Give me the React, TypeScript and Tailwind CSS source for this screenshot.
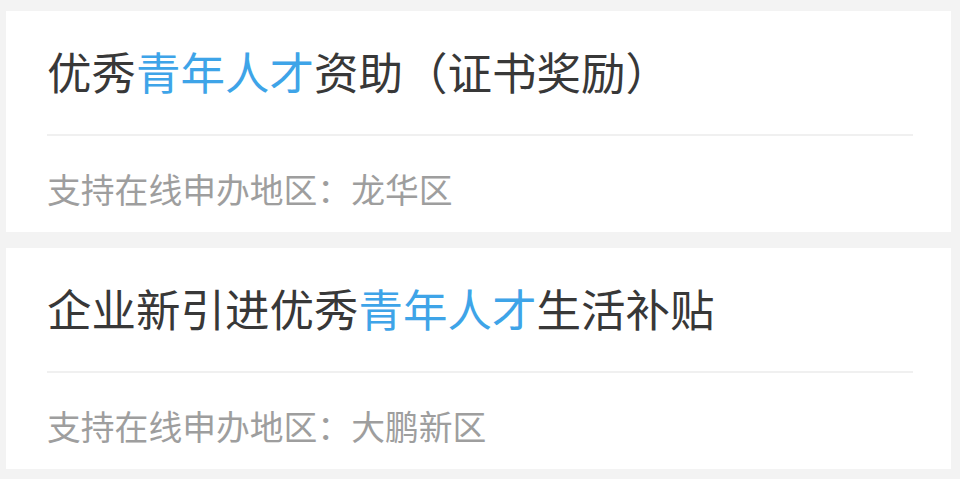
import React from "react";

const font = { fontFamily: '"Noto Sans CJK SC", "Noto Sans", sans-serif' };

function Card({ before, hl, after, region }: { before: string; hl: string; after: string; region: string }) {
  return (
    <div className="bg-white h-[221px] pl-[41px] pr-[38px] pt-[38px] flex flex-col">
      <div className="text-[44.5px] leading-[44px] font-normal text-[#383838] whitespace-nowrap">
        {before}
        <span className="text-[#3ea4e8]">{hl}</span>
        {after}
      </div>
      <div className="mt-[41px] h-[2px] bg-[#f0f0f0]" />
      <div className="mt-[36px] text-[33.8px] leading-[34px] font-normal text-[#9e9e9e] whitespace-nowrap">
        支持在线申办地区：{region}
      </div>
    </div>
  );
}

export default function App() {
  return (
    <div className="w-[960px] h-[479px] bg-[#f3f3f3] pt-[11px] pl-[6px] pr-[9px] flex flex-col gap-[16px] overflow-hidden" style={font}>
      <Card before="优秀" hl="青年人才" after="资助（证书奖励）" region="龙华区" />
      <Card before="企业新引进优秀" hl="青年人才" after="生活补贴" region="大鹏新区" />
    </div>
  );
}
